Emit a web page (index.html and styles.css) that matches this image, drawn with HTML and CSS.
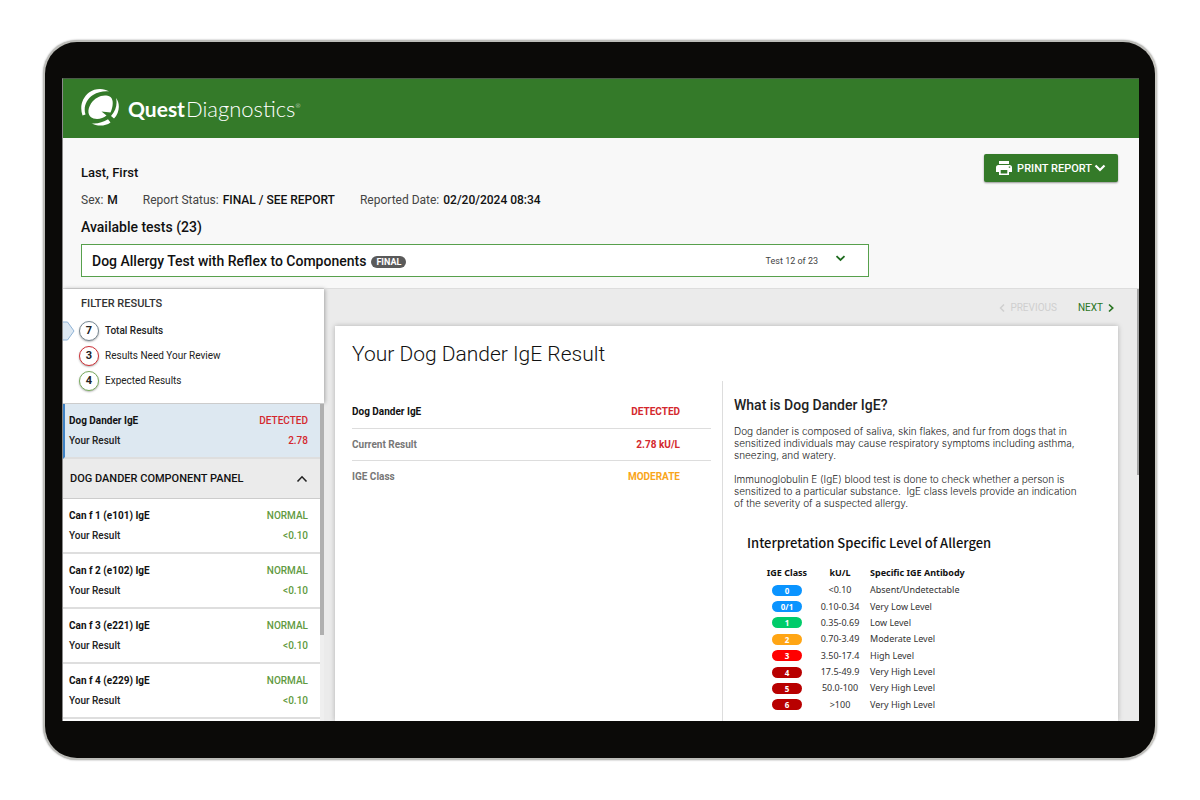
FILE: index.html
```
<!DOCTYPE html>
<html lang="en">
<head>
<meta charset="utf-8">
<title>Quest Diagnostics – Test Results</title>
<link rel="stylesheet" href="styles.css">
</head>
<body>
<div class="device">
<div class="screen">
  <header class="brand-bar">
    <svg class="brand-mark" viewBox="0 0 39 38" aria-hidden="true">
      <path fill="#fff" d="M28 3.500C23 0 14 0 8 4.500C1 10-1.500 19 1.500 27.500L4.500 26.500C2 19 5.500 11 12 7C17 4 23 2.800 28 3.500Z"/>
      <path fill="#fff" d="M29.500 9C23 5.500 14.500 9 10 15.500C6 22 6.500 28.500 12.500 30.500C17 31.700 22 30.500 25.500 27.500L20.500 23.500L29.500 24.500C32 19 33 12 29.500 9Z"/>
      <path fill="#fff" d="M35 10C39.500 16 38.500 24.500 33 30.500L30 28C35 22.500 36.500 16 35 10Z"/>
      <path fill="#fff" d="M10.500 35.300C16 36 22 34.500 27 31.300L29.500 34.500C24 38.500 16 38.500 10.500 35.300Z"/>
    </svg>
    <span class="brand-name"><b>Quest</b><span>Diagnostics</span><sup>®</sup></span>
  </header>

  <section class="patient">
    <div class="patient-top">
      <div>
        <h1 class="patient-name">Last, First</h1>
        <dl class="facts">
          <div><dt>Sex:</dt><dd>M</dd></div>
          <div><dt>Report Status:</dt><dd>FINAL / SEE REPORT</dd></div>
          <div><dt>Reported Date:</dt><dd>02/20/2024 08:34</dd></div>
        </dl>
      </div>
      <button class="print" type="button">
        <svg width="16" height="14" viewBox="0 0 16 14" aria-hidden="true"><path fill="#fff" d="M3 0H13V3H3ZM2.500 4H13.500Q16 4 16 6.500V11H13V8H3V11H0V6.500Q0 4 2.500 4ZM4 9H12V14H4Z"/><path fill="#fff" d="M3 7.500H13V14H3Z"/><path fill="#347a29" d="M4.700 9H11.300V12.400H4.700ZM12.800 5.500H14.200V6.700H12.800Z"/></svg>
        <span>PRINT REPORT</span>
        <svg width="12" height="8" viewBox="0 0 12 8" aria-hidden="true"><path d="M1.500 1.500L6 6L10.500 1.500" fill="none" stroke="#fff" stroke-width="2.200"/></svg>
      </button>
    </div>
    <h2 class="available">Available tests (23)</h2>
    <button class="test-select" type="button" aria-haspopup="listbox">
      <span class="test-name">Dog Allergy Test with Reflex to Components</span>
      <span class="pill">FINAL</span>
      <span class="test-count">Test 12 of 23</span>
      <svg class="test-arrow" width="11" height="7" viewBox="0 0 11 7" aria-hidden="true"><path d="M1.500 1.200L5.500 5L9.500 1.200" fill="none" stroke="#1e6b1e" stroke-width="1.800"/></svg>
    </button>
  </section>

  <div class="workspace">
    <aside class="sidebar">
      <nav class="filters">
        <h2 class="filters-title">FILTER RESULTS</h2>
        <button class="filter filter-active" type="button">
          <svg class="marker" width="12" height="20" viewBox="0 0 12 20" aria-hidden="true"><path d="M0 1H4.500L11 10L4.500 19H0" fill="#dde8f2" stroke="#8fb3d6"/></svg>
          <span class="count">7</span>Total Results</button>
        <button class="filter" type="button"><span class="count count-red">3</span>Results Need Your Review</button>
        <button class="filter" type="button"><span class="count count-green">4</span>Expected Results</button>
      </nav>
      <div class="results">
        <div class="results-list">
          <a class="result result-current" href="#dog-dander"><b>Dog Dander IgE</b><span class="red">DETECTED</span><span>Your Result</span><span class="red">2.78</span></a>
          <button class="panel-toggle" type="button" aria-expanded="true">DOG DANDER COMPONENT PANEL
            <svg width="12" height="8" viewBox="0 0 12 8" aria-hidden="true"><path d="M1.500 6.500L6 1.800L10.500 6.500" fill="none" stroke="#222" stroke-width="1.600"/></svg>
          </button>
          <a class="result" href="#f1"><b>Can f 1 (e101) IgE</b><span class="green">NORMAL</span><span>Your Result</span><span class="green">&lt;0.10</span></a>
          <a class="result" href="#f2"><b>Can f 2 (e102) IgE</b><span class="green">NORMAL</span><span>Your Result</span><span class="green">&lt;0.10</span></a>
          <a class="result" href="#f3"><b>Can f 3 (e221) IgE</b><span class="green">NORMAL</span><span>Your Result</span><span class="green">&lt;0.10</span></a>
          <a class="result" href="#f4"><b>Can f 4 (e229) IgE</b><span class="green">NORMAL</span><span>Your Result</span><span class="green">&lt;0.10</span></a>
          <div class="list-end"></div>
        </div>
        <div class="track"><div class="thumb thumb-list"></div></div>
      </div>
    </aside>

    <main class="main">
      <nav class="pager">
        <button class="page-link" type="button" disabled><svg width="6" height="10" viewBox="0 0 6 10" aria-hidden="true"><path d="M5 1.500L1.500 5L5 8.500" fill="none" stroke="currentColor" stroke-width="1.500"/></svg>PREVIOUS</button>
        <button class="page-link" type="button">NEXT<svg width="6" height="10" viewBox="0 0 6 10" aria-hidden="true"><path d="M1 1.500L4.700 5L1 8.500" fill="none" stroke="currentColor" stroke-width="1.700"/></svg></button>
      </nav>
      <article class="card" id="dog-dander">
        <h2 class="card-title">Your Dog Dander IgE Result</h2>
        <div class="card-columns">
          <table class="summary">
            <tbody>
              <tr><th class="strong" scope="row">Dog Dander IgE</th><td class="red">DETECTED</td></tr>
              <tr><th scope="row">Current Result</th><td class="red">2.78 kU/L</td></tr>
              <tr><th scope="row">IGE Class</th><td class="amber">MODERATE</td></tr>
            </tbody>
          </table>
          <section class="about">
            <h3 class="about-title">What is Dog Dander IgE?</h3>
            <p>Dog dander is composed of saliva, skin flakes, and fur from dogs that in<br>sensitized individuals may cause respiratory symptoms including asthma,<br>sneezing, and watery.</p>
            <p>Immunoglobulin E (IgE) blood test is done to check whether a person is<br>sensitized to a particular substance.&nbsp; IgE class levels provide an indication<br>of the severity of a suspected allergy.</p>
            <div class="levels-block">
              <h3 class="levels-title">Interpretation Specific Level of Allergen</h3>
              <table class="levels">
                <thead><tr><th>IGE Class</th><th>kU/L</th><th>Specific IGE Antibody</th></tr></thead>
                <tbody>
                  <tr><td><span class="level blue">0</span></td><td>&lt;0.10</td><td>Absent/Undetectable</td></tr>
                  <tr><td><span class="level blue">0/1</span></td><td>0.10-0.34</td><td>Very Low Level</td></tr>
                  <tr><td><span class="level emerald">1</span></td><td>0.35-0.69</td><td>Low Level</td></tr>
                  <tr><td><span class="level orange">2</span></td><td>0.70-3.49</td><td>Moderate Level</td></tr>
                  <tr><td><span class="level scarlet">3</span></td><td>3.50-17.4</td><td>High Level</td></tr>
                  <tr><td><span class="level crimson">4</span></td><td>17.5-49.9</td><td>Very High Level</td></tr>
                  <tr><td><span class="level crimson">5</span></td><td>50.0-100</td><td>Very High Level</td></tr>
                  <tr><td><span class="level crimson">6</span></td><td>&gt;100</td><td>Very High Level</td></tr>
                </tbody>
              </table>
            </div>
          </section>
        </div>
      </article>
      <div class="thumb thumb-page"></div>
    </main>
  </div>
</div>
</div>
</body>
</html>
```
FILE: styles.css
```
* { box-sizing: border-box; }
body, h1, h2, h3, p, dl, dd { margin: 0; }
body {
  height: 100vh;
  padding: 40px 43px;
  background: #fff;
  color: #222;
  font-family: Roboto, "Liberation Sans", sans-serif;
  font-size: 10px;
}
button { font: inherit; color: inherit; border: 0; background: none; padding: 0; cursor: pointer; text-align: left; }
a { color: inherit; text-decoration: none; }
svg { flex: none; display: block; }

.device {
  height: 100%;
  padding: 36px 16px 37px 17px;
  border: 2px solid #bdbdb9;
  border-right-color: #c9c8c2;
  border-radius: 34px;
  background: #0b0a08;
  box-shadow: 0 0 2px #999;
}
.screen {
  height: 100%;
  display: flex;
  flex-direction: column;
  overflow: hidden;
  border-left: 1px solid #8a8a8a;
  border-top: 1px solid #4b5a48;
  background: #f8f8f8;
}

.brand-bar {
  flex: none;
  display: flex;
  align-items: center;
  gap: 8px;
  height: 59px;
  padding: 0 18px;
  background: #347a29;
  color: #fff;
}
.brand-mark { width: 39px; height: 38px; margin-bottom: 4px; }
.brand-name { font-family: Lato, sans-serif; font-size: 22px; font-weight: 300; line-height: 24px; white-space: nowrap; }
.brand-name b { font-size: 21px; font-weight: 700; margin-right: 1px; }
.brand-name sup { font-size: 6px; line-height: 6px; vertical-align: 9px; }

.patient { flex: none; padding: 16px 21px 11px 18px; }
.patient-top { display: flex; justify-content: space-between; align-items: flex-start; }
.patient-name { font-size: 13px; line-height: 16px; margin-top: 11px; font-weight: 500; color: #111; }
.facts { display: flex; gap: 25px; margin-top: 11px; font-size: 12px; line-height: 16px; }
.facts div { display: flex; gap: 4px; }
.facts dt { color: #444; }
.facts dd { font-weight: 500; color: #111; }
.print {
  display: flex;
  align-items: center;
  gap: 5px;
  height: 28px;
  padding: 0 12px;
  border-radius: 2px;
  background: #347a29;
  color: #fff;
  font-size: 11px;
  font-weight: 500;
  box-shadow: 0 1px 2px rgba(0, 0, 0, .4);
}
.print span { margin-right: -3px; }
.available { margin-top: 11px; font-size: 14px; line-height: 16px; font-weight: 500; color: #111; }
.test-select {
  display: flex;
  align-items: center;
  width: 76%;
  height: 33px;
  margin-top: 9px;
  padding: 0 22px 0 10px;
  border: 1px solid #57a04c;
  background: #fff;
}
.test-name { font-size: 14px; font-weight: 500; color: #111; }
.pill { margin: 3px 0 0 5px; padding: 0 5px; border-radius: 6px; background: #5a5a5a; color: #fff; font-size: 9px; line-height: 12px; font-weight: 700; }
.test-count { margin-left: auto; color: #444; font-size: 9px; }
.test-arrow { margin: 0 0 5px 17px; }

.workspace { flex: 1; min-height: 0; display: flex; background: #ebebeb; }
.sidebar { width: 261px; flex: none; display: flex; flex-direction: column; border-top: 1px solid #ddd; }
.filters { flex: none; padding: 7px 0 10px 16px; background: #fff; box-shadow: 1px 0 4px rgba(0, 0, 0, .3); }
.filters-title { margin: 0 0 6px 2px; font-size: 11px; line-height: 16px; font-weight: 500; color: #333; }
.filter { position: relative; display: flex; align-items: center; gap: 6px; width: 100%; height: 25px; color: #222; }
.filter-active { font-weight: 500; }
.marker { position: absolute; left: -16px; top: 3px; }
.count {
  width: 20px;
  height: 20px;
  border: 1px solid #788892;
  border-radius: 50%;
  font-size: 11px;
  line-height: 18px;
  font-weight: 700;
  text-align: center;
  background: #fff;
  box-shadow: 0 1px 2px rgba(0, 0, 0, .3);
}
.count-red { border-color: #cf2f35; }
.count-green { border-color: #79ab5d; }

.results { flex: 1; min-height: 0; display: flex; border-top: 1px solid #ccc; }
.results-list { flex: 1; overflow: hidden; background: #fff; }
.result {
  display: grid;
  grid-template-columns: 1fr auto;
  align-content: start;
  height: 55px;
  padding: 7px 12px 0 6px;
  border-bottom: 2px solid #dedede;
  line-height: 20px;
  font-weight: 500;
  color: #222;
}
.result b { font-weight: 700; color: #111; }
.result span:nth-of-type(odd) { text-align: right; }
.result span:last-child { text-align: right; }
.result span:nth-of-type(2) { text-align: left; }
.result-current { background: #dde8f1; border-left: 2px solid #3f83c6; padding-left: 4px; }
.panel-toggle {
  display: flex;
  align-items: center;
  justify-content: space-between;
  width: 100%;
  height: 40px;
  padding: 0 12px 0 7px;
  border-bottom: 1px solid #ccc;
  background: #ebebeb;
  color: #111;
  font-size: 11px;
  font-weight: 500;
}
.list-end { height: 40px; background: #fff; }
.track { width: 4px; background: #efefef; }
.thumb { background: #b0b0b0; }
.thumb-list { height: 73%; }
.thumb-page { position: absolute; right: 0; top: 0; width: 2px; height: 43%; background: #a3a3a3; }

.red { color: #d4282e; }
.green { color: #5f9a41; }
.amber { color: #f9a51a; }

.main { flex: 1; position: relative; display: flex; flex-direction: column; min-width: 0; padding: 0 21px 0 11px; border-top: 1px solid #ddd; }
.pager { flex: none; display: flex; justify-content: flex-end; gap: 21px; height: 37px; padding-right: 4px; }
.page-link { display: flex; align-items: center; gap: 5px; color: #2a7523; }
.page-link:disabled { color: #cfcfcf; }
.card { flex: 1; min-height: 0; display: flex; flex-direction: column; padding: 14px 7px 0 17px; background: #fff; box-shadow: 0 0 5px rgba(0, 0, 0, .25); }
.card-title { font-size: 21px; line-height: 28px; font-weight: 300; color: #111; }
.card-columns { flex: 1; min-height: 0; display: grid; grid-template-columns: 359fr 389fr; gap: 11px; margin-top: 13px; }
.summary { width: 100%; margin-top: 15px; align-self: start; border-collapse: collapse; font-weight: 700; }
.summary th { height: 32px; padding: 0; text-align: left; color: #777; }
.summary .strong { color: #111; }
.summary td { padding: 0 31px 0 0; text-align: right; }
.summary tr + tr { border-top: 1px solid #ddd; }
.about { padding: 16px 0 0 11px; border-left: 1px solid #ddd; line-height: 12px; color: #222; }
.about-title { font-size: 14px; line-height: 16px; font-weight: 500; color: #222; }
.about p { margin-top: 12px; font-family: Inter, sans-serif; font-weight: 300; white-space: nowrap; }
.levels-block { margin: 24px 0 0 13px; font-family: "Noto Sans CJK SC", "Noto Sans", sans-serif; }
.levels-title { font-size: 13px; line-height: 20px; font-weight: 500; color: #111; }
.levels { height: 149px; margin: 11px 0 0 17px; border-collapse: collapse; font-family: "Noto Sans", sans-serif; font-size: 9px; line-height: 12px; color: #333; }
.levels th, .levels td { padding: 0; text-align: center; }
.levels th { height: 18px; font-weight: 700; color: #111; }
.levels th:nth-child(1) { width: 46px; }
.levels th:nth-child(2) { width: 60px; }
.levels th:nth-child(3), .levels td:nth-child(3) { text-align: left; }
.level { display: block; width: 30px; height: 11px; margin: 0 auto; border-radius: 6px; color: #fff; font-size: 8px; line-height: 11px; font-weight: 700; }
.blue { background: #0a94ff; }
.emerald { background: #00cc6a; }
.orange { background: #ffa514; }
.scarlet { background: #ff0000; }
.crimson { background: #b80000; }
```
